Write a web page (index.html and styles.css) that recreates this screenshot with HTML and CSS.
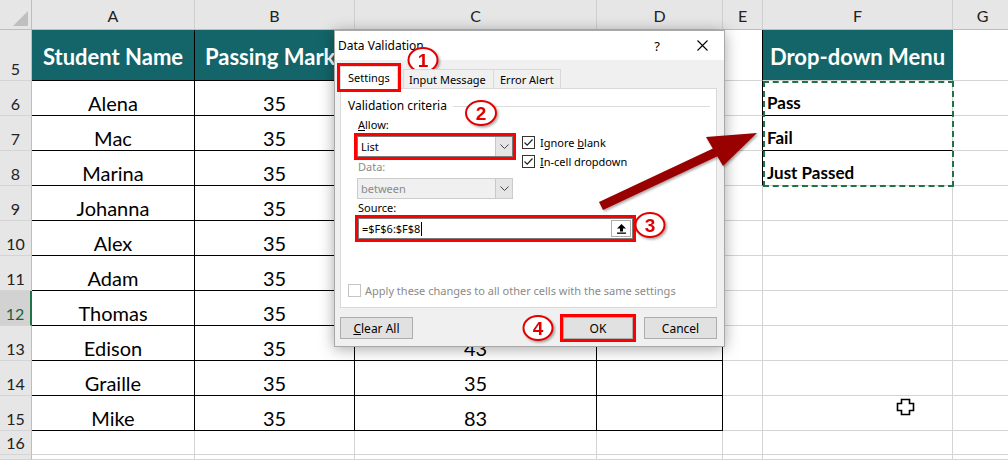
FILE: index.html
```html
<!DOCTYPE html>
<html lang="en">
<head>
    <meta charset="UTF-8">
    <title>Data Validation - Drop-down List</title>
    <link rel="stylesheet" href="styles.css">
</head>
<body>
    <div class="sheet">
        <!-- column headers -->
        <div class="row colhead">
            <div class="corner"><span class="tri"></span></div>
            <div class="hd">A</div>
            <div class="hd">B</div>
            <div class="hd">C</div>
            <div class="hd">D</div>
            <div class="hd">E</div>
            <div class="hd">F</div>
            <div class="hd">G</div>
        </div>

        <div class="row r5">
            <div class="rh">5</div>
            <div class="cell t th">Student Name</div>
            <div class="cell t th clip">Passing Marks</div>
            <div class="cell t th">Obtained Marks</div>
            <div class="cell t th">Status</div>
            <div class="cell eb"></div>
            <div class="cell th fh">Drop-down Menu</div>
            <div class="cell"></div>
        </div>
        <div class="row r">
            <div class="rh">6</div>
            <div class="cell t">Alena</div>
            <div class="cell t">35</div>
            <div class="cell t">72</div>
            <div class="cell t"></div>
            <div class="cell eb"></div>
            <div class="cell f fb">Pass</div>
            <div class="cell"></div>
        </div>
        <div class="row r">
            <div class="rh">7</div>
            <div class="cell t">Mac</div>
            <div class="cell t">35</div>
            <div class="cell t">30</div>
            <div class="cell t"></div>
            <div class="cell eb"></div>
            <div class="cell f fb">Fail</div>
            <div class="cell"></div>
        </div>
        <div class="row r">
            <div class="rh">8</div>
            <div class="cell t">Marina</div>
            <div class="cell t">35</div>
            <div class="cell t">64</div>
            <div class="cell t"></div>
            <div class="cell eb"></div>
            <div class="cell f">Just Passed</div>
            <div class="cell"></div>
        </div>
        <div class="row r">
            <div class="rh">9</div>
            <div class="cell t">Johanna</div>
            <div class="cell t">35</div>
            <div class="cell t">35</div>
            <div class="cell t"></div>
            <div class="cell"></div>
            <div class="cell"></div>
            <div class="cell"></div>
        </div>
        <div class="row r">
            <div class="rh">10</div>
            <div class="cell t">Alex</div>
            <div class="cell t">35</div>
            <div class="cell t">28</div>
            <div class="cell t"></div>
            <div class="cell"></div>
            <div class="cell"></div>
            <div class="cell"></div>
        </div>
        <div class="row r">
            <div class="rh">11</div>
            <div class="cell t">Adam</div>
            <div class="cell t">35</div>
            <div class="cell t">56</div>
            <div class="cell t"></div>
            <div class="cell"></div>
            <div class="cell"></div>
            <div class="cell"></div>
        </div>
        <div class="row r">
            <div class="rh sel">12</div>
            <div class="cell t">Thomas</div>
            <div class="cell t">35</div>
            <div class="cell t">45</div>
            <div class="cell t"></div>
            <div class="cell"></div>
            <div class="cell"></div>
            <div class="cell"></div>
        </div>
        <div class="row r">
            <div class="rh">13</div>
            <div class="cell t">Edison</div>
            <div class="cell t">35</div>
            <div class="cell t">43</div>
            <div class="cell t"></div>
            <div class="cell"></div>
            <div class="cell"></div>
            <div class="cell"></div>
        </div>
        <div class="row r">
            <div class="rh">14</div>
            <div class="cell t">Graille</div>
            <div class="cell t">35</div>
            <div class="cell t">35</div>
            <div class="cell t"></div>
            <div class="cell"></div>
            <div class="cell"></div>
            <div class="cell"></div>
        </div>
        <div class="row r">
            <div class="rh">15</div>
            <div class="cell t">Mike</div>
            <div class="cell t">35</div>
            <div class="cell t">83</div>
            <div class="cell t"></div>
            <div class="cell"></div>
            <div class="cell"></div>
            <div class="cell"></div>
        </div>
        <div class="row r16">
            <div class="rh">16</div>
            <div class="cell"></div>
            <div class="cell"></div>
            <div class="cell"></div>
            <div class="cell"></div>
            <div class="cell"></div>
            <div class="cell"></div>
            <div class="cell"></div>
        </div>
        <div class="row r17">
            <div class="rh"></div>
            <div class="cell"></div>
            <div class="cell"></div>
            <div class="cell"></div>
            <div class="cell"></div>
            <div class="cell"></div>
            <div class="cell"></div>
            <div class="cell"></div>
        </div>
    </div>

    <!-- copy marquee around F6:F8 -->
    <div class="ants"></div>

    <!-- Data Validation dialog -->
    <div class="dialog">
        <div class="titlebar">
            <span>Data Validation</span>
            <span class="help">?</span>
            <svg class="close" width="11" height="11" viewBox="0 0 11 11">
                <path d="M0.5 0.5 L10.5 10.5 M10.5 0.5 L0.5 10.5" stroke="#000" stroke-width="1.1" fill="none"/>
            </svg>
        </div>
        <div class="dbody">
            <div class="tabs">
                <div class="tab active">Settings</div>
                <div class="tab first">Input Message</div>
                <div class="tab">Error Alert</div>
            </div>
            <div class="panel">
                <div class="legend">
                    <span>Validation criteria</span>
                    <span class="rule"></span>
                </div>
                <div class="criteria">
                    <div class="left">
                        <div class="lbl"><u>A</u>llow:</div>
                        <div class="select mark">
                            <span class="val">List</span>
                            <span class="dd"><svg width="9" height="5" viewBox="0 0 9 5"><path d="M0.5 0.5 L4.5 4.5 L8.5 0.5" stroke="#444" fill="none"/></svg></span>
                        </div>
                        <div class="lbl dim">Data:</div>
                        <div class="select disabled">
                            <span class="val">between</span>
                            <span class="dd"><svg width="9" height="5" viewBox="0 0 9 5"><path d="M0.5 0.5 L4.5 4.5 L8.5 0.5" stroke="#444" fill="none"/></svg></span>
                        </div>
                    </div>
                    <div class="right">
                        <div class="check">
                            <span class="box"><svg width="11" height="11" viewBox="0 0 11 11"><path d="M1.5 5.5 L4.2 8.2 L9.5 2.5" stroke="#222" stroke-width="1.2" fill="none"/></svg></span>
                            <span>Ignore <u>b</u>lank</span>
                        </div>
                        <div class="check">
                            <span class="box"><svg width="11" height="11" viewBox="0 0 11 11"><path d="M1.5 5.5 L4.2 8.2 L9.5 2.5" stroke="#222" stroke-width="1.2" fill="none"/></svg></span>
                            <span><u>I</u>n-cell dropdown</span>
                        </div>
                    </div>
                </div>
                <div class="lbl src">Source:</div>
                <div class="source mark">
                    <span class="val">=$F$6:$F$8</span><span class="caret"></span>
                    <span class="pick"><svg width="11" height="11" viewBox="0 0 11 11"><path d="M5.5 1 L10 5.5 H7 V8.5 H4 V5.5 H1 Z" fill="#000"/><rect x="1" y="9.5" width="9" height="1.3" fill="#000"/></svg></span>
                </div>
                <div class="check apply">
                    <span class="box off"></span>
                    <span>Apply these changes to all other cells with the same settings</span>
                </div>
            </div>
            <div class="buttons">
                <div class="btn"><span><u>C</u>lear All</span></div>
                <div class="btn ok mark">OK</div>
                <div class="btn">Cancel</div>
            </div>
        </div>
    </div>

    <!-- step callouts, arrow and cell cursor drawn over the sheet -->
    <svg class="overlay" width="1008" height="460" viewBox="0 0 1008 460">
        <defs>
            <filter id="shadow" x="-20%" y="-20%" width="140%" height="140%">
                <feDropShadow dx="1.5" dy="1.5" stdDeviation="1.2" flood-color="#000" flood-opacity="0.35"/>
            </filter>
        </defs>
        <g filter="url(#shadow)">
            <polygon points="599,202 714,148 718,156 603,210" fill="#990000"/>
            <polygon points="757,133 706,137 723,166" fill="#990000"/>
        </g>
        <g class="step" filter="url(#shadow)">
            <ellipse cx="423" cy="60" rx="14.5" ry="12" />
            <text x="423" y="67">1</text>
            <ellipse cx="481" cy="113" rx="15" ry="12" />
            <text x="481" y="120">2</text>
            <ellipse cx="650" cy="225" rx="14.5" ry="12" />
            <text x="650" y="232">3</text>
            <ellipse cx="538" cy="328" rx="14.5" ry="12" />
            <text x="538" y="335">4</text>
        </g>
        <polygon points="901.5,399.5 909.5,399.5 909.5,403.5 913.5,403.5 913.5,410.5 909.5,410.5 909.5,414.5 901.5,414.5 901.5,410.5 897.5,410.5 897.5,403.5 901.5,403.5" fill="#fff" stroke="#000" stroke-width="1.6"/>
    </svg>
</body>
</html>
```

FILE: styles.css
```css
* {
    margin: 0;
    padding: 0;
    box-sizing: border-box;
}

body {
    width: 1008px;
    height: 460px;
    overflow: hidden;
    position: relative;
    background: #fff;
    font-family: 'Lato', 'Open Sans', sans-serif;
}

/* ---------- worksheet ---------- */

.row {
    display: grid;
    grid-template-columns: 32px 163px 160px 242px 126px 40px 190px 60px;
}

.colhead { height: 30px; }
.r5 { height: 51px; }
.r { height: 35px; }
.r16 { height: 24px; }
.r17 { height: 5px; }

.corner {
    background: #e6e6e6;
    border-right: 1px solid #bdbdbd;
    border-bottom: 1px solid #bdbdbd;
    position: relative;
}

.corner .tri {
    position: absolute;
    right: 3px;
    bottom: 3px;
    width: 0;
    height: 0;
    border-left: 15px solid transparent;
    border-bottom: 15px solid #bfbfbf;
}

.hd {
    background: #e6e6e6;
    border-right: 1px solid #cfcfcf;
    border-bottom: 1px solid #bdbdbd;
    display: flex;
    align-items: center;
    justify-content: center;
    padding-top: 2px;
    font-size: 16px;
    color: #222;
}

.rh {
    background: #e6e6e6;
    border-right: 1px solid #bdbdbd;
    border-bottom: 1px solid #d4d4d4;
    display: flex;
    align-items: flex-end;
    justify-content: center;
    padding-bottom: 2px;
    font-size: 16px;
    line-height: 18px;
    color: #222;
}

.rh.sel {
    background: #d2d2d2;
    border-right: 2px solid #217346;
    color: #1d5f3b;
}

.cell {
    border-right: 1px solid #d4d4d4;
    border-bottom: 1px solid #d4d4d4;
    display: flex;
    align-items: flex-end;
    justify-content: center;
    padding-bottom: 1px;
    font-size: 20px;
    line-height: 22px;
    color: #000;
    white-space: nowrap;
    overflow: hidden;
}

.cell.t {
    border-right-color: #000;
    border-bottom-color: #000;
}

.cell.th {
    background: #136569;
    color: #fff;
    font-size: 22px;
    font-weight: 700;
    align-items: center;
    padding-bottom: 0;
    padding-top: 3px;
}

.cell.clip {
    justify-content: flex-start;
    padding-left: 10px;
}

.cell.fh {
    border-right-color: #136569;
}

.cell.eb {
    border-right-color: #000;
}

.cell.f {
    justify-content: flex-start;
    padding-left: 4px;
    padding-bottom: 1px;
    font-size: 17px;
    font-weight: 700;
}

.cell.fb {
    border-bottom-color: #000;
}

.ants {
    position: absolute;
    left: 763px;
    top: 81px;
    width: 191px;
    height: 106px;
    border: 2px dashed #217346;
}

/* ---------- dialog ---------- */

.dialog {
    position: absolute;
    left: 334px;
    top: 30px;
    width: 391px;
    height: 317px;
    background: #f0f0f0;
    border: 1px solid #a8a8a8;
    box-shadow: 0 2px 14px rgba(0,0,0,0.35);
    font-family: 'Noto Sans', 'Open Sans', sans-serif;
    font-size: 11px;
    color: #000;
    display: flex;
    flex-direction: column;
}

.titlebar {
    height: 29px;
    background: #fff;
    display: flex;
    align-items: center;
    padding-left: 3px;
    font-size: 12px;
}

.titlebar .help {
    margin-left: auto;
    margin-right: 37px;
    font-size: 13px;
}

.titlebar .close {
    margin-right: 16px;
}

.dbody {
    padding: 6px 7px 0 5px;
}

.tabs {
    display: flex;
    align-items: flex-end;
    height: 22px;
    position: relative;
    z-index: 1;
}

.tab {
    height: 19px;
    padding: 0 6px;
    border: 1px solid #d9d9d9;
    border-bottom: none;
    background: #f0f0f0;
    display: flex;
    align-items: center;
    margin-left: -1px;
    white-space: nowrap;
}

.tab.active {
    height: 23px;
    width: 58px;
    margin-left: 0;
    margin-bottom: -1px;
    background: #fff;
    outline: 3px solid #f00;
    padding: 0 0 2px 7px;
}

.tab.first {
    margin-left: 5px;
    width: 91px;
    padding-left: 5px;
}

.panel {
    height: 220px;
    background: #fff;
    border: 1px solid #d9d9d9;
    padding: 8px 6px 0 7px;
}

.legend {
    display: flex;
    align-items: center;
    height: 17px;
    gap: 6px;
    font-size: 12px;
}

.legend .rule {
    flex: 1;
    border-top: 1px solid #dcdcdc;
    margin-top: 1px;
}

.criteria {
    display: flex;
    padding-left: 9px;
    gap: 9px;
}

.left {
    width: 156px;
}

.lbl {
    height: 16px;
    line-height: 16px;
    margin-top: 3px;
    padding-left: 1px;
}

.lbl.dim {
    color: #8a8a8a;
    margin-top: 2px;
}

.select {
    height: 21px;
    margin-top: 3px;
    display: flex;
    align-items: center;
    background: #fff;
    border: 1px solid #7a7a7a;
}

.select .val,
.source .val {
    padding-left: 3px;
}

.select .dd {
    margin-left: auto;
    width: 17px;
    height: 100%;
    background: #e5e5e5;
    border-left: 1px solid #c8c8c8;
    display: flex;
    align-items: center;
    justify-content: center;
}

.select.disabled {
    background: #f0f0f0;
    border-color: #cccccc;
    color: #8a8a8a;
}

.mark {
    outline: 3px solid #f00;
}

.right {
    padding-top: 19px;
}

.check {
    display: flex;
    align-items: center;
    gap: 5px;
    height: 19px;
}

.check .box {
    width: 13px;
    height: 13px;
    border: 1px solid #333;
    background: #fff;
    display: flex;
    align-items: center;
    justify-content: center;
}

.check .box.off {
    border-color: #c4c4c4;
}

.lbl.src {
    margin-top: 1px;
    padding-left: 10px;
}

.source {
    width: 275px;
    height: 21px;
    margin: 2px 0 0 10px;
    display: flex;
    align-items: center;
    background: #fff;
    border: 1px solid #7a7a7a;
}

.source .caret {
    width: 1px;
    height: 14px;
    background: #000;
    margin-left: 1px;
}

.source .pick {
    margin-left: auto;
    width: 20px;
    height: 17px;
    margin-right: 1px;
    background: #fff;
    border: 1px solid #adadad;
    display: flex;
    align-items: center;
    justify-content: center;
}

.check.apply {
    margin-top: 42px;
    color: #8a8a8a;
    gap: 4px;
}

.buttons {
    display: flex;
    margin-top: 9px;
    gap: 11px;
}

.btn {
    width: 73px;
    height: 22px;
    background: #e1e1e1;
    border: 1px solid #adadad;
    display: flex;
    align-items: center;
    justify-content: center;
    font-size: 12px;
}

.btn.ok {
    margin-left: auto;
    width: 70px;
}

/* ---------- annotations ---------- */

.overlay {
    position: absolute;
    left: 0;
    top: 0;
    pointer-events: none;
}

.step ellipse {
    fill: #fff;
    stroke: #e00000;
    stroke-width: 2;
}

.step text {
    font-family: 'Liberation Sans', sans-serif;
    font-weight: 700;
    font-size: 19px;
    fill: #e00000;
    text-anchor: middle;
}
```
